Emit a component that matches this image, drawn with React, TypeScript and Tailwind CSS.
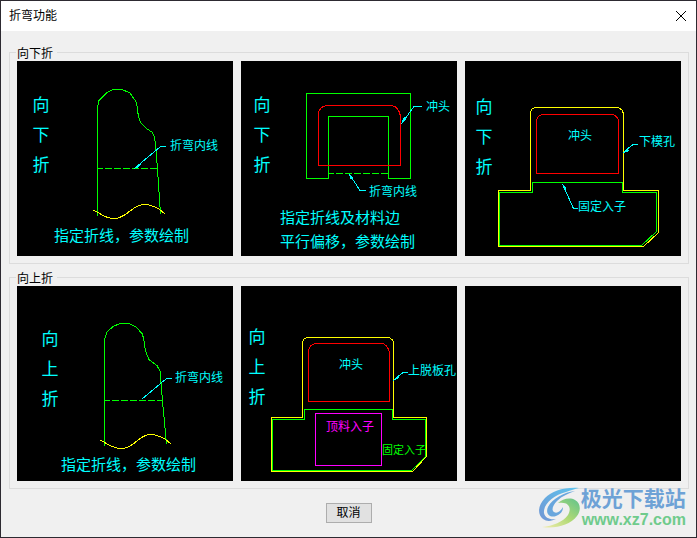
import type { ReactNode } from "react";

const CYAN = "#00ffff";
const GREEN = "#00ff00";
const YELLOW = "#ffff00";
const RED = "#ff0000";
const MAGENTA = "#ff00ff";

function Drawing({ label, children }: { label: string; children?: ReactNode }) {
    return (
        <button type="button" aria-label={label} className="block w-full bg-black">
            <svg viewBox="0 0 216 195" className="block w-full h-auto" fill="none" strokeWidth="1">
                {children}
            </svg>
        </button>
    );
}

function Label({ x, y, size = 12, color = CYAN, children }: { x: number; y: number; size?: number; color?: string; children: string }) {
    return (
        <text x={x} y={y} fontSize={size} fill={color}>
            {children}
        </text>
    );
}

// Three big characters stacked down the left side
function SideTitle({ x, y, text }: { x: number; y: number; text: string }) {
    return (
        <g fontSize="17" fill={CYAN} textAnchor="middle">
            {text.split("").map((char, i) => (
                <text key={i} x={x} y={y + i * 30}>{char}</text>
            ))}
        </g>
    );
}

function Leader({ line, arrow }: { line: string; arrow: string }) {
    return (
        <g>
            <path d={line} stroke={CYAN} shapeRendering="crispEdges" />
            <path d={arrow} fill={CYAN} shapeRendering="crispEdges" />
        </g>
    );
}

function DownFoldLine() {
    return (
        <Drawing label="向下折 指定折线">
            <g shapeRendering="crispEdges">
                <path d="M80.500 155V46L82 39.500L90 31.500L96 28.500H105L113 32L119.500 41.500L121.500 56L124 62L130 68L135 71L137.500 76L138.500 83L140.500 108L143.500 153" stroke={GREEN} />
                <path d="M81 107.500H140" stroke={GREEN} strokeDasharray="7 2" strokeDashoffset="2" />
                <path d="M76 149.500C82 150 86 157.500 97 157.500C110 157.500 115 143.500 127 143.500C137 143.500 143 148 148 153" stroke={YELLOW} />
            </g>
            <Leader line="M149 85.500H143.500L118 107" arrow="M116 108L124 103L122 106Z" />
            <SideTitle x={24} y={50} text="向下折" />
            <Label x={153} y={89}>折弯内线</Label>
            <Label x={37} y={180} size={15}>指定折线，参数绘制</Label>
        </Drawing>
    );
}

function DownFoldEdge() {
    return (
        <Drawing label="向下折 指定折线及材料边">
            <g shapeRendering="crispEdges">
                <path d="M65.500 32.500H169.500V117.500H147.500V55.500H87.500V117.500H65.500Z" stroke={GREEN} />
                <path d="M77.500 104.500V52Q78.500 46 85.500 44.500H150C156 45 158 49 159.500 55V104.500Z" stroke={RED} />
                <path d="M88 112.500H147" stroke={GREEN} strokeDasharray="7 2" strokeDashoffset="2" />
            </g>
            <Leader line="M181 45.500H173L161 62" arrow="M159.500 64L163 56L165 58Z" />
            <Leader line="M125 129.500H119L109 114" arrow="M107.500 112L112 116L110 119Z" />
            <SideTitle x={21} y={50} text="向下折" />
            <Label x={185} y={50}>冲头</Label>
            <Label x={128} y={135}>折弯内线</Label>
            <Label x={39} y={162} size={15}>指定折线及材料边</Label>
            <Label x={39} y={186} size={15}>平行偏移，参数绘制</Label>
        </Drawing>
    );
}

function DownDie() {
    return (
        <Drawing label="向下折 下模孔">
            <g shapeRendering="crispEdges">
                <path d="M33.500 129.500H65.500V52.500Q66 47 70.500 46.500H153Q158 48 158.500 54V129.500H193.500V171.500L178.500 185.500H33.500Z" stroke={YELLOW} />
                <path d="M34.500 131.500H67.500V121.500H157.500V131.500H191.500V170.500L176.500 184.500H34.500Z" stroke={GREEN} />
                <path d="M71.500 112.500V60.500Q72 54 78 53.500H147.500Q153 55 153.500 60.500V112.500Z" stroke={RED} />
            </g>
            <Leader line="M173 83.500H168L160 90" arrow="M158 92L162 87L164 90Z" />
            <Leader line="M113 147.500H108.500L98 124" arrow="M97 122L101 127L99 129Z" />
            <SideTitle x={19} y={52} text="向下折" />
            <Label x={103} y={79}>冲头</Label>
            <Label x={174} y={85}>下模孔</Label>
            <Label x={113} y={150}>固定入子</Label>
        </Drawing>
    );
}

function UpFoldLine() {
    return (
        <Drawing label="向上折 指定折线">
            <g shapeRendering="crispEdges">
                <path d="M87.500 160V54L90 46L96 40.500L103 37.500H112L119 41L125 47.500L126.500 52L128.500 65L132 73.500L140 79.500L143 85L145.500 115L149.500 158" stroke={GREEN} />
                <path d="M88 114.500H145" stroke={GREEN} strokeDasharray="7 2" strokeDashoffset="2" />
                <path d="M83 154C90 157 94 162.500 105 162.500C117 162.500 122 148.500 133 148.500C143 148.500 149 153 154 158" stroke={YELLOW} />
            </g>
            <Leader line="M155 92.500H149.500L125 113" arrow="M123.500 114L128 109L129 111Z" />
            <SideTitle x={33} y={59} text="向上折" />
            <Label x={158} y={96}>折弯内线</Label>
            <Label x={44} y={184} size={15}>指定折线，参数绘制</Label>
        </Drawing>
    );
}

function UpDie() {
    return (
        <Drawing label="向上折 上脱板孔">
            <g shapeRendering="crispEdges">
                <path d="M30.500 131.500H61.500V57Q62 52 67 51.500H147.500Q152 53 152.500 57V131.500H185.500V170.500L171.500 185.500H30.500Z" stroke={YELLOW} />
                <path d="M31.500 133.500H63.500V123.500H151.500V133.500H184.500V170.500L170.500 184.500H31.500Z" stroke={GREEN} />
                <path d="M67.500 115.500V65Q69 58 74.500 57.500H141Q146 58 148.500 66V115.500Z" stroke={RED} />
                <path d="M74.500 127.500H140.500V179.500H74.500Z" stroke={MAGENTA} />
            </g>
            <Leader line="M167 86.500H162L154 93" arrow="M152 95L156 90L158 92Z" />
            <SideTitle x={16} y={57} text="向上折" />
            <Label x={98} y={83}>冲头</Label>
            <Label x={167} y={89}>上脱板孔</Label>
            <Label x={85} y={145} color={MAGENTA}>顶料入子</Label>
            <Label x={141} y={168} size={11} color={GREEN}>固定入子</Label>
        </Drawing>
    );
}

function Group({ title, children }: { title: string; children: ReactNode }) {
    return (
        <fieldset className="min-w-0 border border-[#dcdcdc] px-[7px] pt-px pb-[7px]">
            <legend className="-ml-px pl-px pr-1 pt-1 text-xs leading-3">{title}</legend>
            <div className="grid grid-cols-3 gap-2">{children}</div>
        </fieldset>
    );
}

function Watermark() {
    return (
        <div className="absolute right-[10px] bottom-[8px] flex items-end">
            <svg viewBox="0 0 42 42" className="w-[42px] h-[42px]">
                <defs>
                    <linearGradient id="swirlBlue" x1="0" y1="1" x2="1" y2="0">
                        <stop offset="0" stopColor="#7196d4" />
                        <stop offset="1" stopColor="#5cc4ee" />
                    </linearGradient>
                    <linearGradient id="swirlGreen" x1="0" y1="1" x2="1" y2="0">
                        <stop offset="0" stopColor="#f3edb0" />
                        <stop offset="0.5" stopColor="#b0d975" />
                        <stop offset="1" stopColor="#5fc28c" />
                    </linearGradient>
                </defs>
                <path d="M40 1C25 0 13 4 6 11C-1 18 -2 27 4 32C8 35 13 34 17 32C11 33 6 31 5 26C4 17 15 8 27 5C32 3 36 2 40 1Z" fill="url(#swirlBlue)" />
                <path d="M36 4C25 5 13 12 9 20C6 27 11 31 17 29C22 27 24 24 24 20C22 24 18 27 15 25C12 23 14 18 18 14C23 9 30 6 36 4Z" fill="#68a6dd" />
                <path d="M19 16C23 12 31 10 36 13C42 16 42 24 38 29C31 38 17 42 3 40C14 39 24 35 29 28C33 21 30 14 19 16Z" fill="url(#swirlGreen)" />
            </svg>
            <div>
                <p className="text-[21px] leading-6 font-bold text-[#6ea2d6]">极光下载站</p>
                <p className="pl-px text-[16px] leading-[18px] font-bold text-[#6fcb8c] [font-family:'Liberation_Sans',sans-serif]">www.xz7.com</p>
            </div>
        </div>
    );
}

export default function App() {
    return (
        <div className="relative min-h-screen flex flex-col border border-[#2d2a31] bg-[#f0f0f0] text-black [font-family:'Liberation_Sans','Noto_Sans_CJK_SC',sans-serif]">
            <header className="h-[30px] shrink-0 flex items-center justify-between bg-white pl-2 pr-[10px]">
                <h1 className="text-xs">折弯功能</h1>
                <button type="button" aria-label="关闭">
                    <svg viewBox="0 0 10 10" className="block w-[10px] h-[10px]" fill="none" stroke="#000">
                        <path d="M0 0L10 10M10 0L0 10" />
                    </svg>
                </button>
            </header>

            <main className="flex flex-col gap-[5px] pt-[13px] pl-2 pr-[7px]">
                <Group title="向下折">
                    <DownFoldLine />
                    <DownFoldEdge />
                    <DownDie />
                </Group>
                <Group title="向上折">
                    <UpFoldLine />
                    <UpDie />
                    <Drawing label="空" />
                </Group>
            </main>

            <footer className="flex justify-center pt-[14px]">
                <button type="button" className="h-5 w-[46px] border border-[#adadad] bg-[#e1e1e1] text-xs leading-none">取消</button>
            </footer>

            <Watermark />
        </div>
    );
}
